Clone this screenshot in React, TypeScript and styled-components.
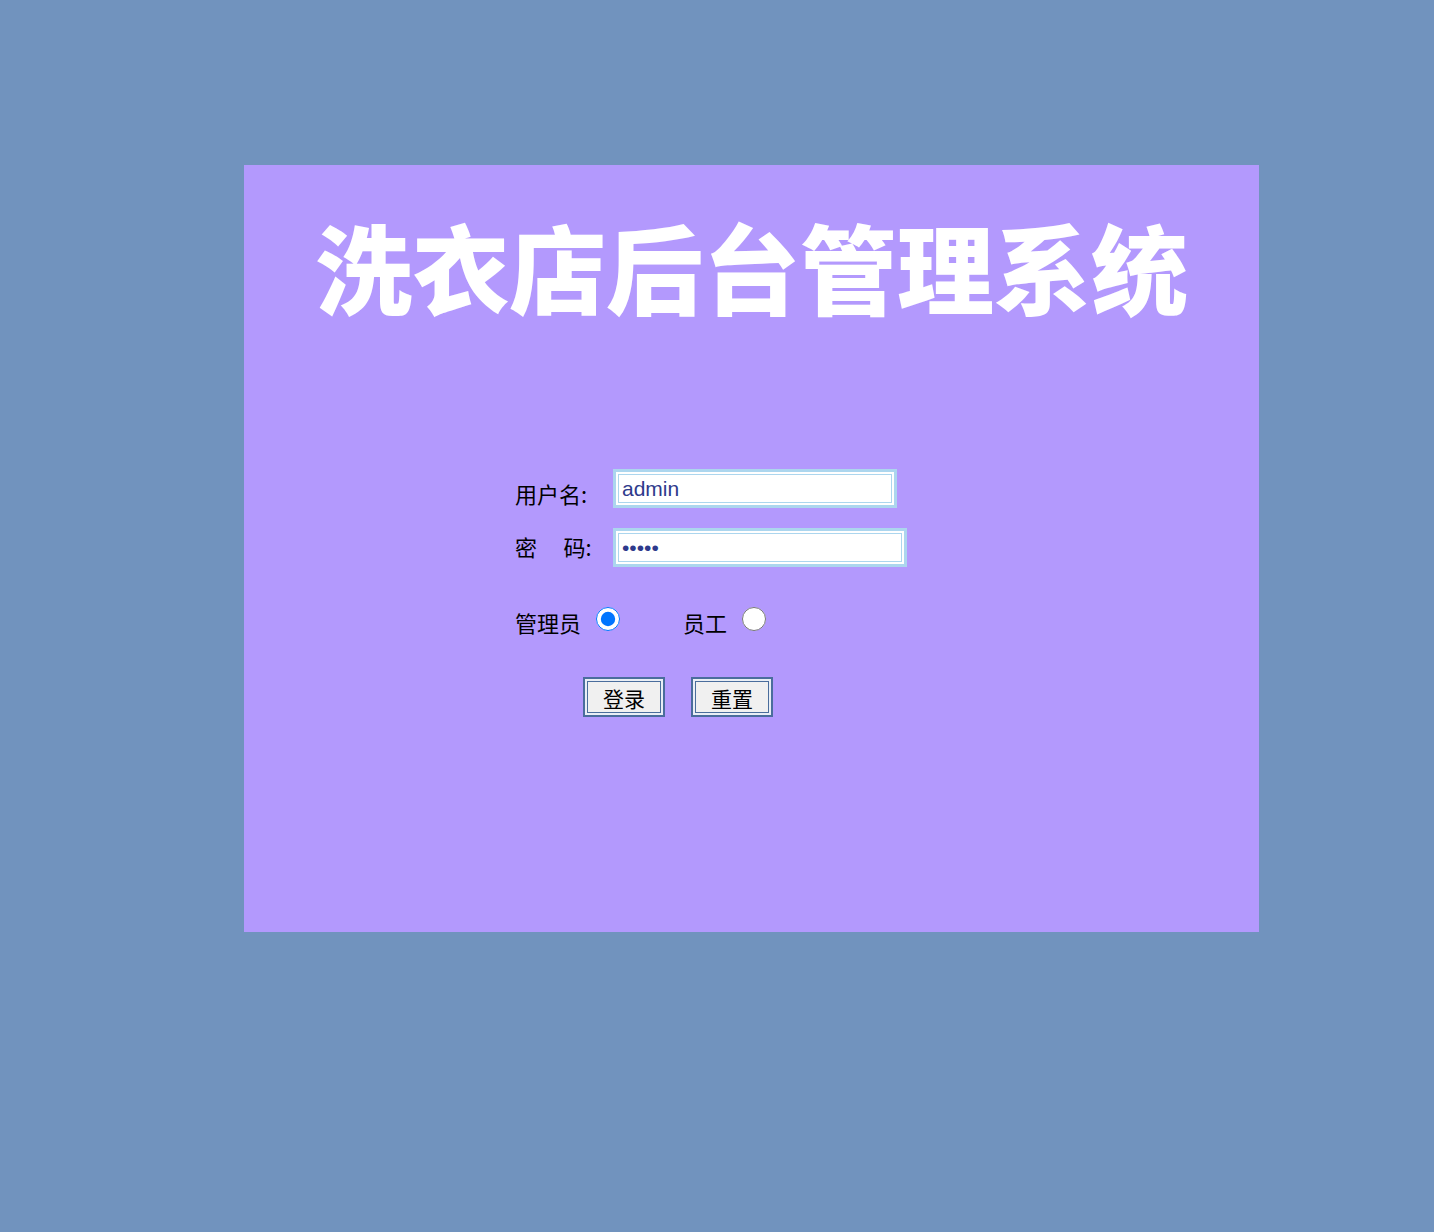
import styled, { createGlobalStyle } from "styled-components";

const Global = createGlobalStyle`
    html, body {
        margin: 0;
        padding: 0;
        background-color: #7193be;
    }
    body {
        min-height: 1232px;
        font-family: "Noto Sans CJK SC", "Noto Sans", sans-serif;
    }
`

const Page = styled.div`
    padding: 165px 0 0 244px;
`
const Panel = styled.div`
    width: 1015px;
    height: 767px;
    background-color: #b399fd;
    box-sizing: border-box;
    padding-top: 51px;
`
const Title = styled.h1`
    margin: 0;
    text-align: center;
    color: #ffffff;
    font-size: 97px;
    line-height: 97px;
    font-weight: 900;
    font-family: "Noto Sans CJK SC", sans-serif;
    white-space: nowrap;
`
const Form = styled.form`
    margin: 156px 0 0 271px;
    display: flex;
    flex-direction: column;
`
const Row = styled.div`
    display: flex;
    align-items: flex-start;
    height: 39px;
    margin-bottom: 20px;
`
const Label = styled.label<{ $top: number }>`
    width: 98px;
    margin-top: ${p => p.$top}px;
    font-size: 22px;
    line-height: 22px;
    color: #000;
    white-space: pre;
`
const Input = styled.input<{ $w: number }>`
    box-sizing: border-box;
    width: ${p => p.$w}px;
    height: 39px;
    border: 3px solid #acd6ee;
    box-shadow: inset 0 0 0 2px #ffffff, inset 0 0 0 3px #acd6ee;
    background: #fff;
    padding: 0 6px;
    font-family: "Liberation Sans", Arial, sans-serif;
    font-size: 21px;
    color: #2e3a8c;
    outline: none;
`
const RadioRow = styled.div`
    display: flex;
    align-items: center;
    margin-top: 17px;
    height: 30px;
`
const RadioText = styled.span`
    font-size: 22px;
    line-height: 22px;
    padding-top: 6px;
`
const Radio = styled.input<{ $gap: number }>`
    width: 24px;
    height: 24px;
    margin: 0 0 0 15px;
    margin-right: ${p => p.$gap}px;
`
const Buttons = styled.div`
    display: flex;
    gap: 26px;
    margin: 43px 0 0 68px;
`
const Button = styled.button`
    box-sizing: border-box;
    width: 82px;
    height: 40px;
    border: 2px solid #4a6d9c;
    box-shadow: inset 0 0 0 2px #e9eef5, inset 0 0 0 3px #4a6d9c;
    background: #f0f0f0;
    font-family: "Noto Sans CJK SC", sans-serif;
    font-size: 21px;
    line-height: 1;
    color: #000;
    padding: 2px 0 0;
`

export default function App() {
    return <Page>
        <Global />
        <Panel>
            <Title>洗衣店后台管理系统</Title>
            <Form onSubmit={e => e.preventDefault()}>
                <Row>
                    <Label $top={13}>用户名:</Label>
                    <Input $w={284} type="text" defaultValue="admin" />
                </Row>
                <Row>
                    <Label $top={7}>{"密\u3000\u2009码:"}</Label>
                    <Input $w={294} type="password" defaultValue="admin" />
                </Row>
                <RadioRow>
                    <RadioText>管理员</RadioText>
                    <Radio $gap={63} type="radio" name="role" defaultChecked />
                    <RadioText>员工</RadioText>
                    <Radio $gap={0} type="radio" name="role" />
                </RadioRow>
                <Buttons>
                    <Button type="submit">登录</Button>
                    <Button type="reset">重置</Button>
                </Buttons>
            </Form>
        </Panel>
    </Page>
}
